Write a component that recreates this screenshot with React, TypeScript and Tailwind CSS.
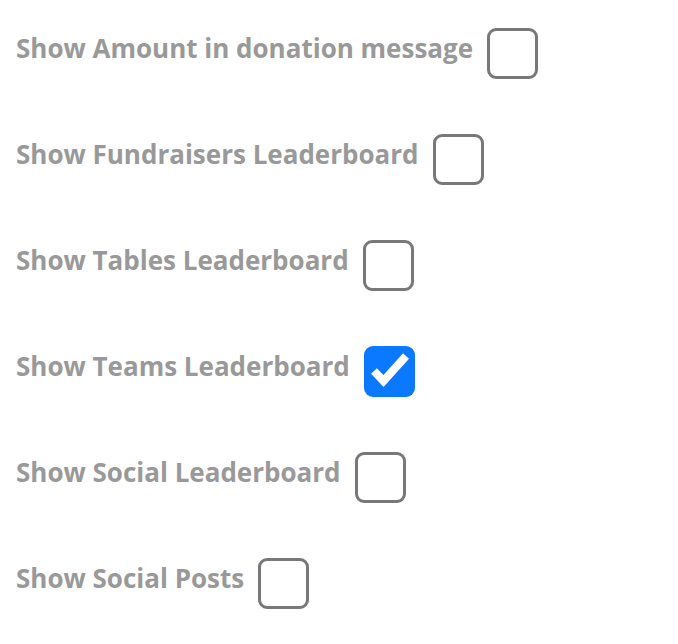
import { useState } from "react";

const OPTIONS = [
  { key: "amount", label: "Show Amount in donation message", checked: false },
  { key: "fundraisers", label: "Show Fundraisers Leaderboard", checked: false },
  { key: "tables", label: "Show Tables Leaderboard", checked: false },
  { key: "teams", label: "Show Teams Leaderboard", checked: true },
  { key: "social", label: "Show Social Leaderboard", checked: false },
  { key: "posts", label: "Show Social Posts", checked: false },
];

function Checkbox({ checked, onChange }: { checked: boolean; onChange: () => void }) {
  return (
    <button
      onClick={onChange}
      className={`relative h-[51px] w-[51px] shrink-0 rounded-[9px] ${
        checked ? "bg-[#0a78ff]" : "border-[3px] border-[#787878] bg-white"
      }`}
    >
      {checked && (
        <svg viewBox="0 0 51 51" className="absolute inset-0 h-full w-full" fill="none">
          <path
            d="M10 25L19.5 35L42 10"
            stroke="white"
            strokeWidth="8"
            strokeLinecap="butt"
            strokeLinejoin="miter"
          />
        </svg>
      )}
    </button>
  );
}

export default function App() {
  const [values, setValues] = useState<Record<string, boolean>>(
    Object.fromEntries(OPTIONS.map((o) => [o.key, o.checked])),
  );

  return (
    <div className="min-h-screen bg-white px-4 pt-[28px] font-['Open_Sans',sans-serif]">
      <div className="flex flex-col gap-[55px]">
        {OPTIONS.map((o) => (
          <label key={o.key} className="flex items-start gap-[14px]">
            <span className="mt-[2px] text-[26px] font-bold leading-[36px] text-[#999999]">
              {o.label}
            </span>
            <Checkbox
              checked={values[o.key]}
              onChange={() => setValues((v) => ({ ...v, [o.key]: !v[o.key] }))}
            />
          </label>
        ))}
      </div>
    </div>
  );
}
